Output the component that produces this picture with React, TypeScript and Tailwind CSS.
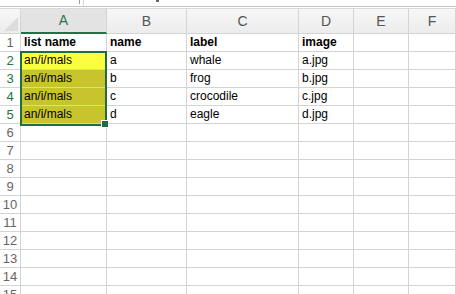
const cols = ["A", "B", "C", "D", "E", "F"];
const widths = ["w-[86px]", "w-[80px]", "w-[112px]", "w-[55px]", "w-[55px]", "flex-1"];

const data: string[][] = [
  ["list name", "name", "label", "image", "", ""],
  ["an/i/mals", "a", "whale", "a.jpg", "", ""],
  ["an/i/mals", "b", "frog", "b.jpg", "", ""],
  ["an/i/mals", "c", "crocodile", "c.jpg", "", ""],
  ["an/i/mals", "d", "eagle", "d.jpg", "", ""],
];

function cellBg(r: number, c: number) {
  if (c !== 0) return "bg-white";
  if (r === 1) return "bg-[#fdfd3f]";
  if (r >= 2 && r <= 4) return "bg-[#c8c52c]";
  return "bg-white";
}

export default function App() {
  const rows = Array.from({ length: 15 }, (_, i) => i);
  return (
    <div className="w-[456px] h-[294px] overflow-hidden bg-white relative font-['Liberation_Sans',Arial,sans-serif]">
      {/* cropped formula bar strip */}
      <div className="h-[6px] flex items-start">
        <div className="ml-[79px] w-px h-[4px] bg-[#9a9a9a]" />
        <div className="ml-[3px] w-px h-[6px] bg-[#d8d8d8]" />
        <div className="ml-[72px] w-[3px] h-[2px] bg-[#666]" />
      </div>
      <div className="h-px bg-[#c4c4c4]" />
      <div className="h-px bg-white" />
      <div className="h-px bg-[#d9d9d9]" />

      {/* column headers */}
      <div className="flex h-[25px] bg-gradient-to-b from-[#f7f7f7] to-[#ececec] border-b border-[#d4d4d4]">
        <div className="w-[21px] border-r border-[#d4d4d4] relative">
          <div className="absolute right-[2px] bottom-[2px] w-0 h-0 border-l-[14px] border-l-transparent border-b-[14px] border-b-[#dcdcdc]" />
        </div>
        {cols.map((c, i) => (
          <div
            key={c}
            className={`${widths[i]} flex items-center justify-center text-[14px] border-r border-[#d4d4d4] ${
              i === 0 ? "bg-[#e3e3e3] text-[#1f7a46] border-b-2 border-b-[#217346] -mb-px" : "text-[#555]"
            }`}
          >
            {c}
          </div>
        ))}
      </div>

      {/* rows */}
      {rows.map((r) => (
        <div key={r} className="flex h-[18px]">
          <div
            className={`w-[21px] flex items-center justify-center text-[13px] border-r border-b border-[#d4d4d4] ${
              r >= 1 && r <= 4 ? "text-[#217346]" : "text-[#666]"
            }`}
          >
            {r + 1}
          </div>
          {cols.map((c, i) => {
            const v = data[r]?.[i] ?? "";
            return (
              <div
                key={c}
                className={`${widths[i]} ${cellBg(r, i)} flex items-end pl-[3px] pb-[1px] text-[12px] leading-[15px] text-black whitespace-nowrap overflow-visible border-r border-b border-[#d4d4d4] ${
                  r === 0 ? "font-bold" : ""
                }`}
              >
                {v}
              </div>
            );
          })}
        </div>
      ))}

      {/* selection outline */}
      <div className="absolute left-[20px] top-[51px] w-[87px] h-[75px] border-2 border-[#1e6e42] pointer-events-none" />
      <div className="absolute left-[102px] top-[121px] w-[6px] h-[6px] bg-[#1e6e42] outline outline-1 outline-white" />
    </div>
  );
}
